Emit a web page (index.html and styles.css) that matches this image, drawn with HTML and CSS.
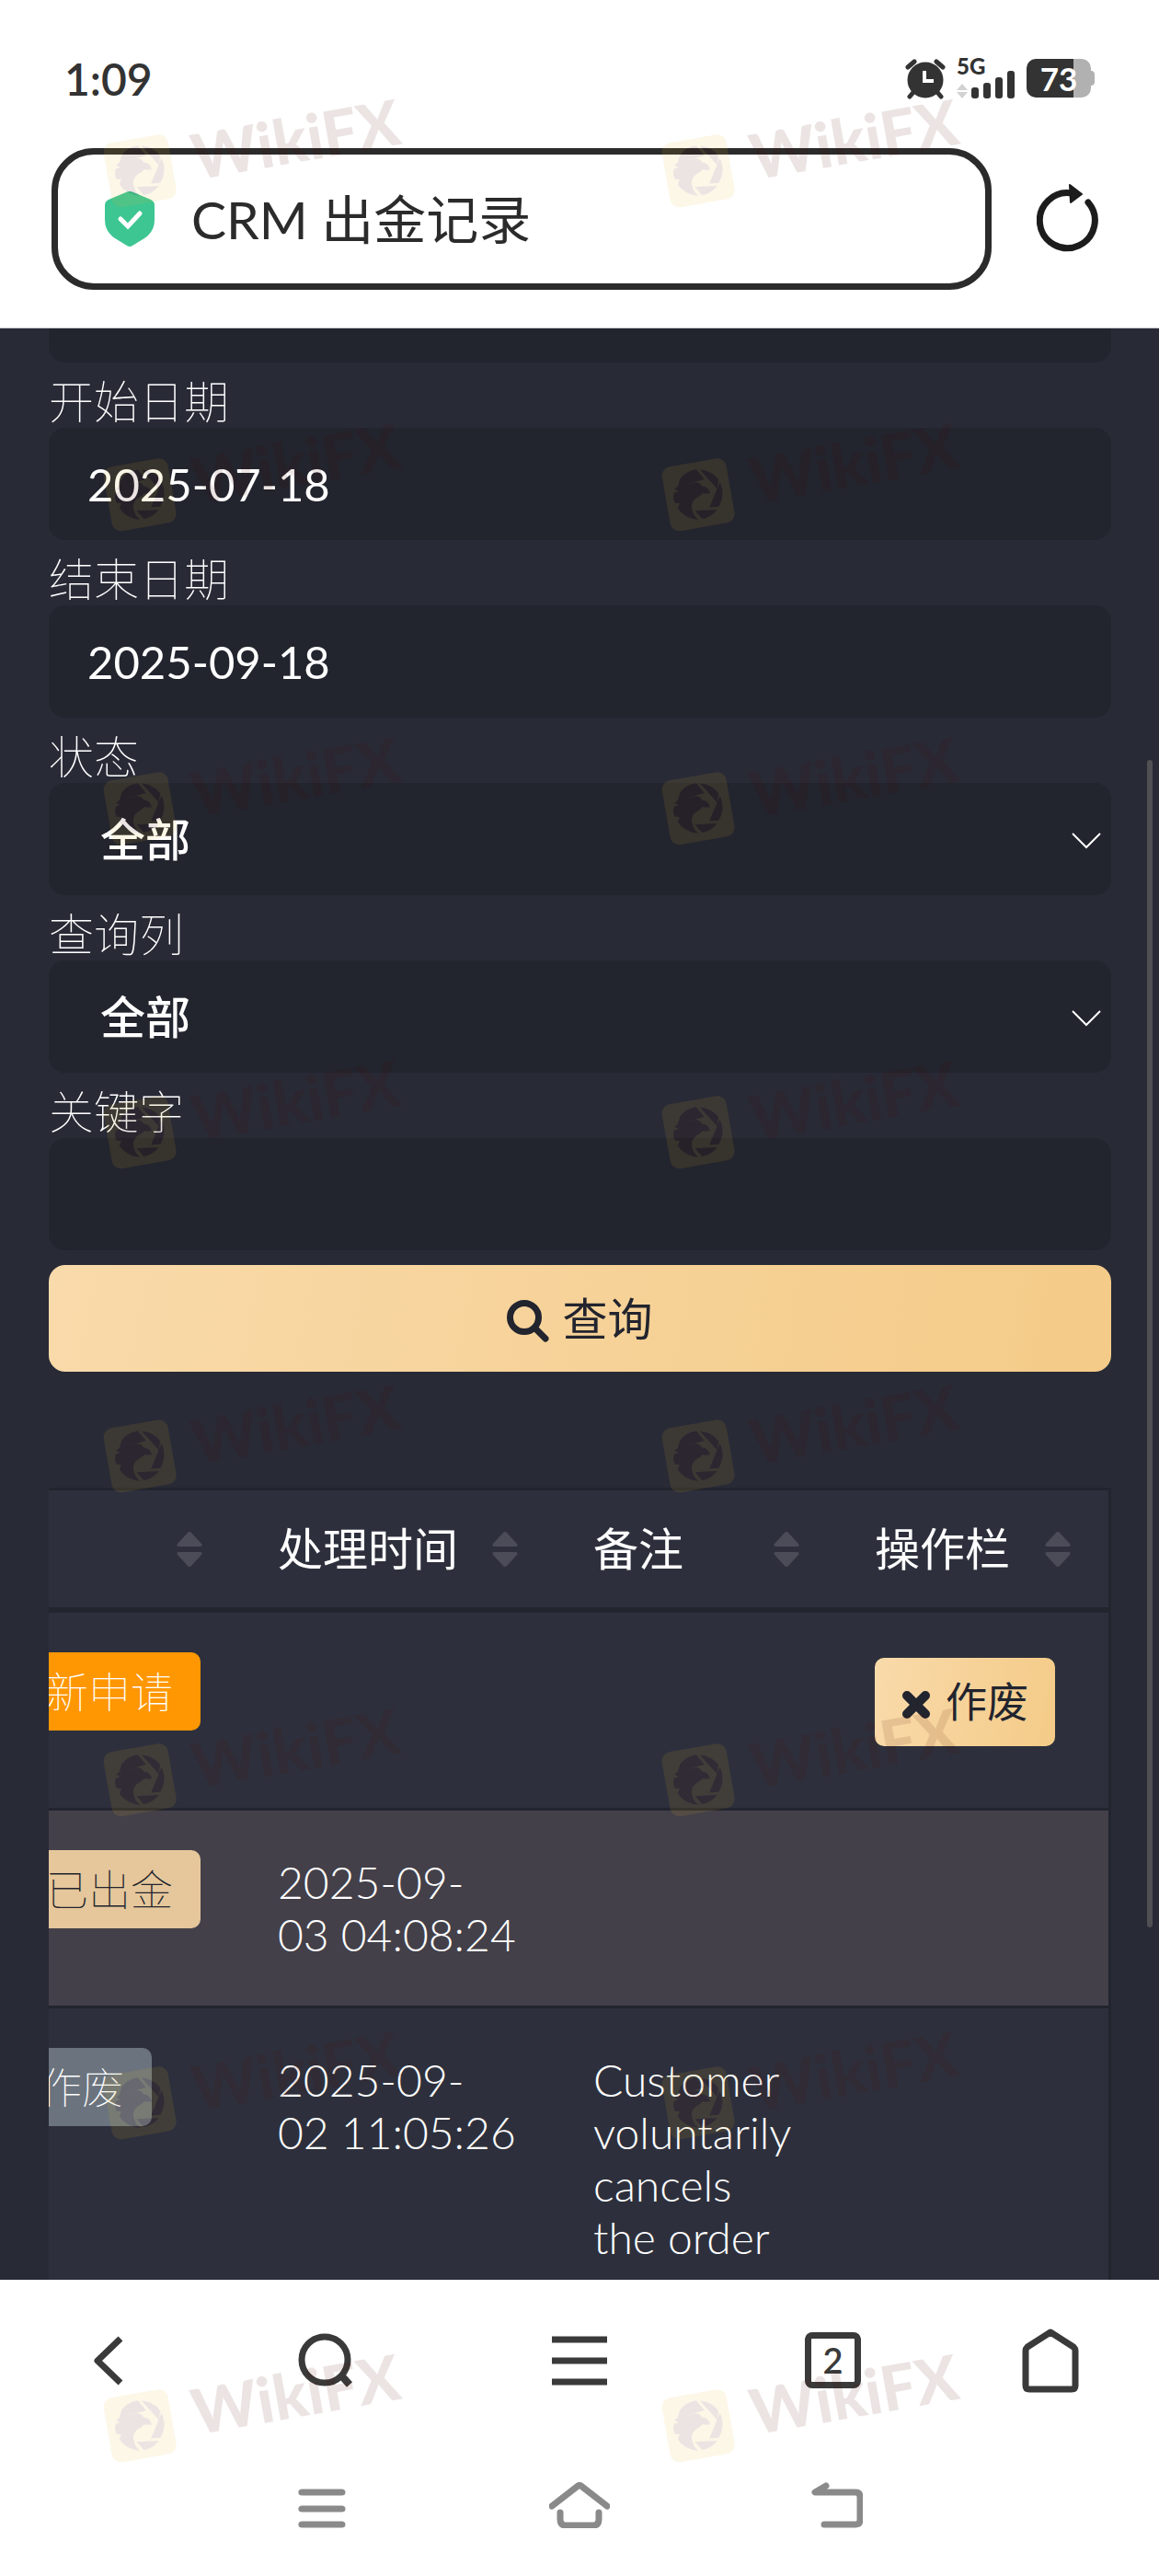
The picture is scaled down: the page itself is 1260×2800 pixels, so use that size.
FILE: index.html
```html
<!DOCTYPE html>
<html lang="zh-CN">
<head>
    <meta charset="UTF-8">
    <meta name="viewport" content="width=device-width, initial-scale=1.0">
    <title>CRM出金记录</title>
    <link rel="stylesheet" href="styles.css">
</head>

<body>
    <header class="top">
        <div class="status-bar">
            <span class="clock">1:09</span>
            <div class="status-icons">
                <svg width="44" height="44" viewBox="0 0 44 44">
                    <path d="M3 9 L10 3 M41 9 L34 3" stroke="#333" stroke-width="5" stroke-linecap="round"/>
                    <path d="M10 35 L5 41 M34 35 L39 41" stroke="#333" stroke-width="5" stroke-linecap="round"/>
                    <circle cx="22" cy="23" r="19.5" fill="#333"/>
                    <path d="M21 13 V24 H31" fill="none" stroke="#fff" stroke-width="4"/>
                </svg>
                <div class="signal">
                    <span class="net">5G</span>
                    <svg width="64" height="44" viewBox="0 0 64 44">
                        <path d="M0 34 L6 27 L12 34 Z M0 36 L6 43 L12 36 Z" fill="#d2d2d2"/>
                        <g fill="#333">
                            <rect x="16" y="31" width="8" height="12" rx="3"/>
                            <rect x="29" y="26" width="8" height="17" rx="3"/>
                            <rect x="42" y="20" width="8" height="23" rx="3"/>
                            <rect x="55" y="13" width="8" height="30" rx="3"/>
                        </g>
                    </svg>
                </div>
                <div class="battery"><span>73</span></div>
            </div>
        </div>
        <div class="address-row">
            <div class="address">
                <svg width="54" height="60" viewBox="0 0 54 60">
                    <path d="M27 0 Q29 0 31 1 L50 9 Q54 11 54 15 V31 Q54 44 43 51 L30 59 Q27 61 24 59 L11 51 Q0 44 0 31 V15 Q0 11 4 9 L23 1 Q25 0 27 0 Z" fill="#3dc692"/>
                    <path d="M17 30 L25 38 L38 24" fill="none" stroke="#fff" stroke-width="5" stroke-linecap="round"/>
                </svg>
                <span>CRM 出金记录</span>
            </div>
            <button class="icon-btn" type="button" aria-label="刷新">
                <svg width="70" height="76" viewBox="0 0 70 76">
                    <path d="M56 20 A30 30 0 1 1 38 10" fill="none" stroke="#1c1c1c" stroke-width="7" stroke-linecap="round"/>
                    <path d="M36 1 L49 11 L37 20 Z" fill="#1c1c1c" stroke="#1c1c1c" stroke-width="2" stroke-linejoin="round"/>
                </svg>
            </button>
        </div>
    </header>

    <main class="page">
        <form class="search-form">
            <div class="field-cut"></div>

            <label for="start">开始日期</label>
            <input class="field" id="start" type="text" value="2025-07-18">

            <label for="end">结束日期</label>
            <input class="field" id="end" type="text" value="2025-09-18">

            <label for="state">状态</label>
            <div class="select-box">
                <select class="field" id="state"><option>全部</option></select>
                <svg class="arrow" width="32" height="18" viewBox="0 0 32 18"><path d="M1 1 L16 16 L31 1" fill="none" stroke="#fff" stroke-width="2"/></svg>
            </div>

            <label for="column">查询列</label>
            <div class="select-box">
                <select class="field" id="column"><option>全部</option></select>
                <svg class="arrow" width="32" height="18" viewBox="0 0 32 18"><path d="M1 1 L16 16 L31 1" fill="none" stroke="#fff" stroke-width="2"/></svg>
            </div>

            <label for="keyword">关键字</label>
            <input class="field" id="keyword" type="text">

            <button class="gold search-btn" type="button">
                <svg width="46" height="46" viewBox="0 0 46 46">
                    <circle cx="19" cy="19" r="15.5" fill="none" stroke="#22242e" stroke-width="7"/>
                    <path d="M31 31 L42 42" stroke="#22242e" stroke-width="7" stroke-linecap="round"/>
                </svg>
                查询
            </button>
        </form>

        <!-- scrolled to the last column -->
        <div class="table-wrap">
            <table>
                <thead>
                    <tr>
                        <th class="col-state"><div class="th">状态<svg class="sort" viewBox="0 0 28 38"><use href="#sort"/></svg></div></th>
                        <th class="col-time"><div class="th">处理时间<svg class="sort" viewBox="0 0 28 38"><use href="#sort"/></svg></div></th>
                        <th class="col-note"><div class="th">备注<svg class="sort" viewBox="0 0 28 38"><use href="#sort"/></svg></div></th>
                        <th class="col-action"><div class="th">操作栏<svg class="sort" viewBox="0 0 28 38"><use href="#sort"/></svg></div></th>
                    </tr>
                </thead>
                <tbody>
                    <tr>
                        <td class="state"><span class="badge new">新申请</span></td>
                        <td></td>
                        <td></td>
                        <td>
                            <button class="gold void-btn" type="button">
                                <svg width="32" height="32" viewBox="0 0 32 32"><path d="M6 6 L26 26 M26 6 L6 26" stroke="#22242e" stroke-width="10" stroke-linecap="round"/></svg>
                                作废
                            </button>
                        </td>
                    </tr>
                    <tr class="even">
                        <td class="state"><span class="badge done">已出金</span></td>
                        <td>2025-09-<br>03 04:08:24</td>
                        <td></td>
                        <td></td>
                    </tr>
                    <tr>
                        <td class="state short"><span class="badge void">作废</span></td>
                        <td>2025-09-<br>02 11:05:26</td>
                        <td class="note">Customer<br>voluntarily<br>cancels<br>the order</td>
                        <td></td>
                    </tr>
                </tbody>
            </table>
        </div>
    </main>
    <div class="scrollbar"></div>

    <footer class="bottom">
        <nav class="browser-nav">
            <button class="icon-btn" type="button" aria-label="后退">
                <svg width="34" height="56" viewBox="0 0 34 56"><path d="M30 4 L5 28 L30 52" fill="none" stroke="#3a3a3a" stroke-width="7" stroke-linejoin="round"/></svg>
            </button>
            <button class="icon-btn" type="button" aria-label="搜索">
                <svg width="60" height="60" viewBox="0 0 60 60"><circle cx="29" cy="29" r="25" fill="none" stroke="#3a3a3a" stroke-width="7"/><path d="M47 46 L56 56" stroke="#3a3a3a" stroke-width="8"/></svg>
            </button>
            <button class="icon-btn" type="button" aria-label="菜单">
                <svg width="60" height="56" viewBox="0 0 60 56"><path d="M0 5 H60 M0 28 H60 M0 51 H60" stroke="#3a3a3a" stroke-width="7"/></svg>
            </button>
            <button class="tabs" type="button">2</button>
            <button class="icon-btn" type="button" aria-label="主页">
                <svg width="62" height="70" viewBox="0 0 62 70"><path d="M31 4 L56 20 Q58 22 58 24 V62 Q58 66 54 66 H8 Q4 66 4 62 V24 Q4 22 6 20 Z" fill="none" stroke="#3a3a3a" stroke-width="7" stroke-linejoin="round"/></svg>
            </button>
        </nav>
        <nav class="system-nav">
            <button class="icon-btn" type="button" aria-label="最近任务">
                <svg width="52" height="50" viewBox="0 0 52 50"><path d="M8 11 H44 M8 29 H44 M8 46 H44" transform="translate(-5 0) scale(1.19 1)" stroke="#8a8a8a" stroke-width="7" stroke-linecap="round"/></svg>
            </button>
            <button class="icon-btn" type="button" aria-label="桌面">
                <svg width="66" height="50" viewBox="0 0 66 50"><path d="M3 26 L30 5 Q33 2 36 5 L63 26 M12 33 V40 Q12 47 18 47 H48 Q54 47 54 40 V33" fill="none" stroke="#8a8a8a" stroke-width="7" stroke-linecap="round"/></svg>
            </button>
            <button class="icon-btn" type="button" aria-label="返回">
                <svg width="56" height="50" viewBox="0 0 56 50"><path d="M16 4 L4 11 H48 Q53 11 53 16 V41 Q53 46 48 46 H14" fill="none" stroke="#8a8a8a" stroke-width="7" stroke-linecap="round" stroke-linejoin="round"/></svg>
            </button>
        </nav>
    </footer>

    <svg class="defs" width="0" height="0">
        <symbol id="sort" viewBox="0 0 28 38">
            <path d="M12 1 Q14 -1 16 1 L27 13 Q29 16 25 16 H3 Q-1 16 1 13 Z M12 37 Q14 39 16 37 L27 25 Q29 22 25 22 H3 Q-1 22 1 25 Z" fill="#4b4c58"/>
        </symbol>
        <symbol id="mark" overflow="visible">
            <g transform="translate(0 13) rotate(-10)">
                <rect width="71" height="71" rx="10" fill="#e4b626"/>
            </g>
            <g transform="translate(0 13) rotate(-10)" class="mark-dark">
                <path d="M19 15 A27 27 0 0 1 38 8 L45 20 L15 23 Z"/>
                <path d="M42 9 A27 27 0 0 1 60 23 L57 33 Z"/>
                <path d="M61 26 A27 27 0 0 1 55 52 L45 51 Z"/>
                <path d="M53 55 A27 27 0 0 1 35 62 L29 52 Z"/>
                <path d="M31 62 Q16 58 11 46 L14 41 L9 40 Q7 34 10 29 L15 28 L11 25 Q19 20 28 22 Q39 20 41 27 Q49 29 48 37 Q46 35 43 36 Q42 33 37 37 Q26 40 26 49 Q26 57 31 62 Z"/>
                <text x="94" y="56" font-size="68">WikiFX</text>
            </g>
        </symbol>
    </svg>
    <svg class="watermarks" aria-hidden="true">
        <use href="#mark" x="111" y="144"/><use href="#mark" x="718" y="144"/>
        <use href="#mark" x="111" y="496"/><use href="#mark" x="718" y="496"/>
        <use href="#mark" x="111" y="837"/><use href="#mark" x="718" y="837"/>
        <use href="#mark" x="111" y="1189"/><use href="#mark" x="718" y="1189"/>
        <use href="#mark" x="111" y="1541"/><use href="#mark" x="718" y="1541"/>
        <use href="#mark" x="111" y="1893"/><use href="#mark" x="718" y="1893"/>
        <use href="#mark" x="111" y="2244"/><use href="#mark" x="718" y="2244"/>
        <use href="#mark" x="111" y="2595"/><use href="#mark" x="718" y="2595"/>
    </svg>
</body>
</html>
```

FILE: styles.css
```css
* {
    box-sizing: border-box;
}
body {
    margin: 0;
    height: 100vh;
    display: flex;
    flex-direction: column;
    position: relative;
    overflow: hidden;
    background: #fff;
    font-family: Lato, "Noto Sans CJK SC", sans-serif;
    font-size: 49px;
    line-height: 57px;
}
svg {
    display: block;
    flex: none;
}
button, input, select {
    font: inherit;
    border: none;
    margin: 0;
    padding: 0;
}
.icon-btn {
    background: none;
    cursor: pointer;
}

/* top bar */
.top {
    flex: none;
    height: 357px;
    border-bottom: 1px solid #c9cacd;
}
.status-bar {
    display: flex;
    justify-content: space-between;
    align-items: center;
    height: 161px;
    padding: 10px 74px 0 70px;
    color: #333;
}
.clock {
    font-size: 48px;
    font-weight: 600;
}
.status-icons {
    display: flex;
    gap: 12px;
}
.signal {
    position: relative;
}
.net {
    position: absolute;
    left: 0;
    top: -4px;
    font-size: 24px;
    line-height: 24px;
    font-weight: 900;
}
.battery {
    position: relative;
    width: 70px;
    height: 42px;
    border-radius: 10px;
    background: linear-gradient(to right, #333 51px, #b1b1b1 51px);
    color: #fff;
    font-size: 35px;
    font-weight: 700;
    line-height: 42px;
    text-align: center;
}
.battery::after {
    content: "";
    position: absolute;
    right: -4px;
    top: 13px;
    width: 4px;
    height: 16px;
    border-radius: 0 4px 4px 0;
    background: #b1b1b1;
}
.address-row {
    display: flex;
    align-items: center;
    gap: 49px;
    padding: 0 63px 0 56px;
}
.address {
    flex: 1;
    display: flex;
    align-items: center;
    gap: 40px;
    height: 154px;
    padding: 0 51px;
    border: 7px solid #2b2b2b;
    border-radius: 46px;
    color: #2b2b2b;
    font-size: 57px;
}

/* search form */
.page {
    flex: 1;
    min-height: 0;
    overflow: hidden;
    background: #282a36;
    padding: 0 52px 0 53px;
    color: #fff;
}
.search-form {
    display: flex;
    flex-direction: column;
}
.field-cut {
    height: 37px;
    border-radius: 0 0 18px 18px;
    background: #22242e;
}
label {
    padding-top: 14px;
    font-weight: 100;
}
.field {
    width: 100%;
    height: 122px;
    padding: 0 42px;
    border-radius: 18px;
    background: #22242e;
    color: #fff;
}
.select-box {
    position: relative;
    height: 122px;
}
select.field {
    appearance: none;
    padding: 0 56px;
    font-weight: 500;
}
.arrow {
    position: absolute;
    right: 11px;
    top: 54px;
}
.gold {
    display: flex;
    align-items: center;
    justify-content: center;
    background: linear-gradient(100deg, #f9daaa, #f4cb88);
    color: #22242e;
    cursor: pointer;
}
.gold svg {
    margin-top: 6px;
}
.search-btn {
    gap: 14px;
    height: 116px;
    margin-top: 16px;
    border-radius: 18px;
}

/* table */
.table-wrap {
    display: flex;
    justify-content: flex-end;
    overflow: hidden;
    margin-top: 126px;
}
table {
    flex: none;
    width: 1292px;
    table-layout: fixed;
    border-collapse: separate;
    border-spacing: 0;
    border-top: 3px solid #22242e;
    border-right: 3px solid #22242e;
    background: #2d303c;
}
.col-state {
    width: 345px;
}
.col-time {
    width: 343px;
}
.col-note {
    width: 306px;
}
th {
    height: 133px;
    padding: 0 41px;
    border-bottom: 6px solid #22242e;
    font-weight: 400;
    text-align: left;
}
.th {
    display: flex;
    align-items: center;
    justify-content: space-between;
}
.sort {
    width: 28px;
    height: 38px;
}
td {
    height: 215px;
    padding: 49px 0 0 41px;
    border-bottom: 3px solid #22242e;
    vertical-align: top;
    font-size: 48px;
    font-weight: 300;
}
.note {
    padding-bottom: 49px;
}
.even td {
    background: #434049;
}
.state {
    padding: 43px 43px 0 0;
    text-align: right;
}
.short {
    padding-right: 96px;
}
.badge {
    display: inline-block;
    padding: 14px 30px;
    border-radius: 10px;
    font-size: 46px;
    font-weight: 100;
}
.new {
    background: #ff9702;
}
.done {
    background: #e5c79b;
    color: #22242e;
}
.void {
    background: #6b747e;
}
.void-btn {
    gap: 16px;
    width: 196px;
    height: 96px;
    border-radius: 10px;
    font-size: 45px;
    font-weight: 400;
}

/* page scroll indicator */
.scrollbar {
    position: absolute;
    right: 7px;
    top: 826px;
    width: 6px;
    height: 1269px;
    border-radius: 3px;
    background: #505053;
}

/* bottom bars */
.bottom {
    flex: none;
    height: 322px;
}
.browser-nav {
    display: grid;
    grid-template-columns: 3fr 3fr 4fr 3fr 3fr;
    place-items: center;
    height: 175px;
}
.tabs {
    width: 61px;
    height: 61px;
    border: 7px solid #3a3a3a;
    border-radius: 8px;
    background: none;
    color: #3a3a3a;
    font-size: 38px;
    font-weight: 600;
    line-height: 47px;
}
.system-nav {
    display: grid;
    grid-template-columns: repeat(3, 1fr);
    place-items: center;
    height: 140px;
    padding: 0 210px;
}

.defs {
    position: absolute;
}
.watermarks {
    position: absolute;
    inset: 0;
    width: 100%;
    height: 100%;
    opacity: 0.107;
    pointer-events: none;
}
.mark-dark {
    fill: #4e0a00;
    font-weight: 900;
}
```
